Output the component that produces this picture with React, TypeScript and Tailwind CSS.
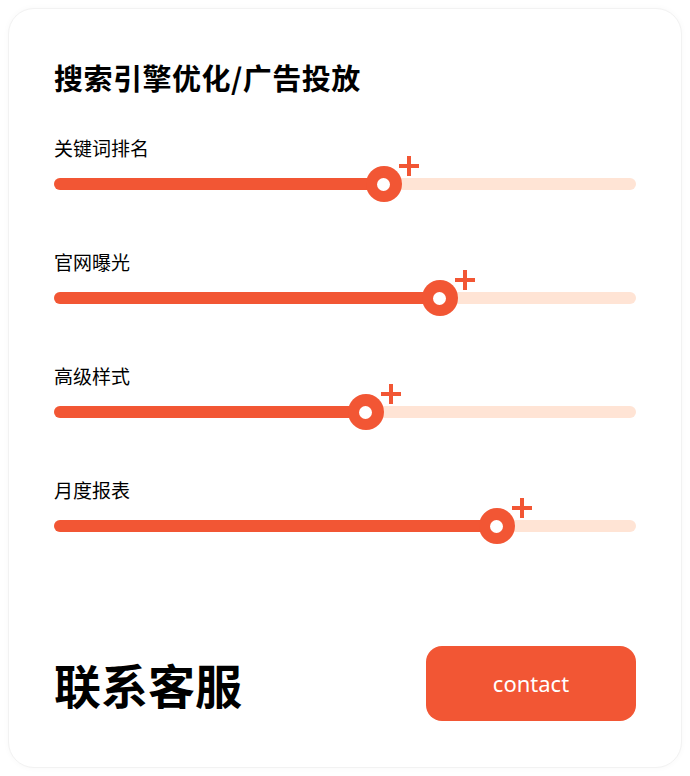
import React from "react";

type Item = { label: string; value: number };

const items: Item[] = [
  { label: "关键词排名", value: 56.7 },
  { label: "官网曝光", value: 66.3 },
  { label: "高级样式", value: 53.6 },
  { label: "月度报表", value: 76.1 },
];

const cjk = { fontFamily: '"Noto Sans CJK SC", "Noto Sans", sans-serif' };

function Slider({ label, value }: Item) {
  return (
    <div className="flex flex-col">
      <div className="h-[28px] text-[19px] leading-[28px] text-black" style={cjk}>
        {label}
      </div>
      <div className="relative mt-[4px] h-[36px]">
        <div className="absolute left-0 right-0 top-[12px] h-[12px] rounded-full bg-[#ffe4d5]" />
        <div
          className="absolute left-0 top-[12px] h-[12px] rounded-full bg-[#f25634]"
          style={{ width: `${value}%` }}
        />
        <div
          className="absolute top-0 flex h-[36px] w-[36px] items-center justify-center rounded-full bg-[#f25634]"
          style={{ left: `calc(${value}% - 18px)` }}
        >
          <div className="h-[13px] w-[13px] rounded-full bg-white" />
          {/* plus badge beside the thumb */}
          <div className="absolute left-[33px] top-[-10px] h-[20px] w-[20px]">
            <div className="absolute left-0 top-[8px] h-[4px] w-[20px] bg-[#f25634]" />
            <div className="absolute left-[8px] top-0 h-[20px] w-[4px] bg-[#f25634]" />
          </div>
        </div>
      </div>
    </div>
  );
}

export default function App() {
  return (
    <div className="min-h-[776px] bg-white p-[8px]">
      <div className="flex h-[760px] flex-col rounded-[26px] border border-[#f2f2f2] bg-white px-[45px] pb-[46px] pt-[48px] shadow-[0_0_6px_rgba(0,0,0,0.03)]">
        <h1
          className="h-[40px] text-[29px] font-bold leading-[40px] tracking-[0.5px] text-black"
          style={cjk}
        >
          搜索引擎优化/广告投放
        </h1>
        <div className="mt-[37px] flex flex-col gap-[46px]">
          {items.map((it) => (
            <Slider key={it.label} {...it} />
          ))}
        </div>
        <div className="mt-auto flex items-center justify-between">
          <div className="text-[47px] font-bold leading-[60px] text-black" style={cjk}>
            联系客服
          </div>
          <button
            className="flex h-[75px] w-[210px] items-center justify-center rounded-[16px] bg-[#f25634] text-[22px] text-white"
            style={{ fontFamily: '"Noto Sans", sans-serif' }}
          >
            contact
          </button>
        </div>
      </div>
    </div>
  );
}
